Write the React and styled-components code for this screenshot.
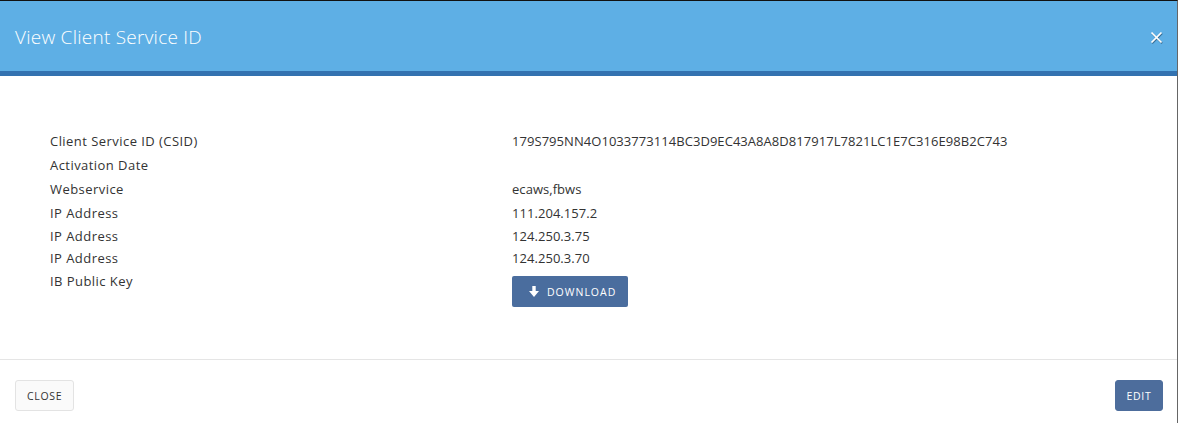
import React from "react";
import styled, { createGlobalStyle } from "styled-components";

const Global = createGlobalStyle`
  html, body { margin: 0; padding: 0; background: #fff; }
  body { font-family: "Open Sans", "Liberation Sans", sans-serif; }
  * { box-sizing: border-box; }
`;

const Modal = styled.div`
  width: 1178px;
  height: 423px;
  display: flex;
  flex-direction: column;
  border-top: 1px solid #111;
  border-right: 1px solid rgba(0, 0, 0, 0.6);
  background: #fff;
`;

const Header = styled.div`
  height: 75px;
  flex: none;
  display: flex;
  align-items: center;
  justify-content: space-between;
  padding: 2px 15px 0 15px;
  background: #5eafe5;
  border-bottom: 5px solid #3372b0;
`;

const Title = styled.h1`
  margin: 0;
  font-family: "Open Sans", sans-serif;
  font-weight: 300;
  font-size: 19px;
  color: #fff;
  letter-spacing: 0.25px;
`;

const CloseX = styled.button`
  border: 0;
  background: none;
  padding: 0;
  width: 12px;
  height: 12px;
  display: flex;
  align-items: center;
  justify-content: center;
  cursor: pointer;
`;

const Body = styled.div`
  flex: 1;
  padding: 53px 50px 0 50px;
`;

const Grid = styled.div`
  display: grid;
  grid-template-columns: 462px 1fr;
  font-size: 13px;
  color: #333;
`;

const Cell = styled.div`
  height: ${(p) => p.$h}px;
  line-height: ${(p) => p.$h}px;
  white-space: nowrap;
  letter-spacing: ${(p) => (p.$label ? 0.45 : 0.05)}px;
`;

const DownloadButton = styled.button`
  margin-top: 7px;
  width: 116px;
  height: 31px;
  border: 0;
  border-radius: 2px;
  background: #4a6d9e;
  color: #fff;
  font-family: "Open Sans", sans-serif;
  font-size: 10.5px;
  letter-spacing: 1px;
  display: flex;
  align-items: center;
  gap: 8px;
  padding: 0 0 0 17px;
  cursor: pointer;
`;

const Footer = styled.div`
  flex: none;
  height: 64px;
  border-top: 1px solid #e5e5e5;
  display: flex;
  justify-content: space-between;
  align-items: flex-start;
  padding: 20px 14px 0 15px;
`;

const FooterButton = styled.button`
  height: 31px;
  padding: 0 ${(p) => (p.$primary ? 10.5 : 11)}px;
  border-radius: 3px;
  border: 1px solid ${(p) => (p.$primary ? "#4d6d9c" : "#e3e3e3")};
  background: ${(p) => (p.$primary ? "#4d6d9c" : "#fafafa")};
  color: ${(p) => (p.$primary ? "#fff" : "#333")};
  font-family: "Open Sans", sans-serif;
  font-size: 10.5px;
  letter-spacing: 0.7px;
  cursor: pointer;
`;

const rows = [
  ["Client Service ID (CSID)", "179S795NN4O1033773114BC3D9EC43A8A8D817917L7821LC1E7C316E98B2C743", 24],
  ["Activation Date", "", 24],
  ["Webservice", "ecaws,fbws", 24],
  ["IP Address", "111.204.157.2", 24],
  ["IP Address", "124.250.3.75", 22],
  ["IP Address", "124.250.3.70", 22],
];

export default function App() {
  return (
    <>
      <Global />
      <Modal>
        <Header>
          <Title>View Client Service ID</Title>
          <CloseX aria-label="close">
            <svg width="11" height="11" viewBox="0 0 11 11" style={{ overflow: "visible" }}>
              <g stroke="#1d3b55" strokeWidth="1.8" opacity="0.55" transform="translate(0.6,0.8)">
                <line x1="0.5" y1="0.5" x2="10.5" y2="10.5" />
                <line x1="10.5" y1="0.5" x2="0.5" y2="10.5" />
              </g>
              <g stroke="#fff" strokeWidth="1.7">
                <line x1="0.5" y1="0.5" x2="10.5" y2="10.5" />
                <line x1="10.5" y1="0.5" x2="0.5" y2="10.5" />
              </g>
            </svg>
          </CloseX>
        </Header>
        <Body>
          <Grid>
            {rows.map(([label, value, h], i) => (
              <React.Fragment key={i}>
                <Cell $h={h} $label>{label}</Cell>
                <Cell $h={h}>{value}</Cell>
              </React.Fragment>
            ))}
            <Cell $h={24} $label>IB Public Key</Cell>
            <div>
              <DownloadButton>
                <svg width="10" height="11" viewBox="0 0 10 11">
                  <path d="M3.3 0h3.4v5H10L5 11 0 5h3.3z" fill="#fff" />
                </svg>
                DOWNLOAD
              </DownloadButton>
            </div>
          </Grid>
        </Body>
        <Footer>
          <FooterButton>CLOSE</FooterButton>
          <FooterButton $primary>EDIT</FooterButton>
        </Footer>
      </Modal>
    </>
  );
}
